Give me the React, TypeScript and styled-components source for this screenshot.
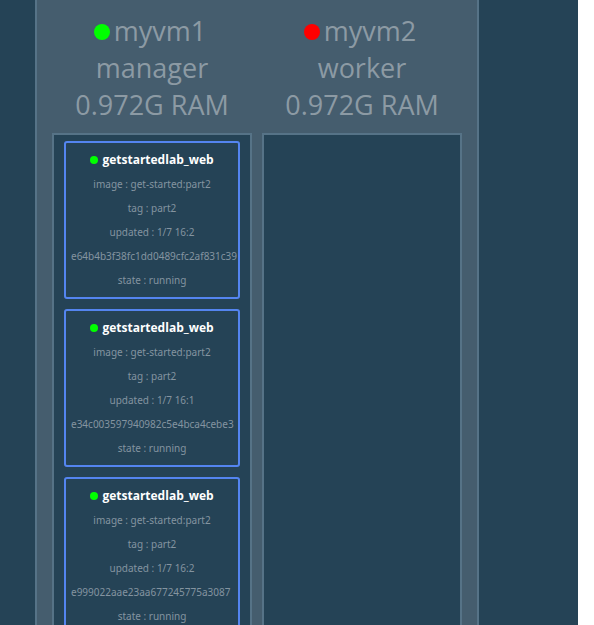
import React from 'react';
import styled, { createGlobalStyle } from 'styled-components';

const GlobalStyle = createGlobalStyle`
  * { box-sizing: border-box; }
  body {
    margin: 0;
    padding-right: 16px;
    background: #ffffff;
    font-family: 'Open Sans', 'Noto Sans', sans-serif;
    scrollbar-width: none;
  }
`;

const Page = styled.main`
  display: flex;
  align-items: stretch;
  min-height: 100vh;
  padding-left: 35px;
  background: #254356;
`;

const Cluster = styled.section`
  display: flex;
  gap: 10px;
  padding: 12px 15px 0;
  background: #455d6e;
  border: solid #567387;
  border-width: 0 2px;
`;

const NodeColumn = styled.article`
  display: flex;
  flex-direction: column;
  width: 200px;
`;

const NodeHeader = styled.header`
  padding-bottom: 10px;
  color: #8c9aa4;
  font-size: 27px;
  line-height: 37px;
  text-align: center;
`;

const NodeLine = styled.div`
  display: flex;
  align-items: center;
  justify-content: center;
  gap: 4px;
  padding-right: 4px;
`;

const NodeName = styled.h1`
  margin: 0;
  font: inherit;
`;

const Dot = styled.span<{ $size: number; $color: string }>`
  flex: none;
  width: ${(p) => p.$size}px;
  height: ${(p) => p.$size}px;
  border-radius: 50%;
  background: ${(p) => p.$color};
`;

const NodeDot = styled(Dot)`
  margin-top: 2px;
`;

const TaskList = styled.ul`
  display: flex;
  flex: 1;
  flex-direction: column;
  gap: 10px;
  margin: 0;
  padding: 6px 10px;
  list-style: none;
  background: #254356;
  border: 2px solid #567387;
`;

const TaskCard = styled.li`
  padding: 5px;
  border: 2px solid #5485f0;
  border-radius: 3px;
  color: #8494a0;
  font-family: 'Noto Sans', 'Open Sans', sans-serif;
  font-size: 10px;
  line-height: 24px;
  text-align: center;
`;

const TaskTitle = styled.h2`
  display: flex;
  align-items: center;
  justify-content: center;
  gap: 4px;
  margin: 0;
  color: #ffffff;
  font-family: 'Open Sans', 'Noto Sans', sans-serif;
  font-size: 12px;
  font-weight: 700;
  line-height: 24px;
`;

const TaskLine = styled.div`
  white-space: nowrap;
`;

const TaskId = styled(TaskLine)`
  margin-right: -7px;
  overflow: hidden;
  text-align: left;
`;

interface Task {
  id: string;
  updated: string;
}

interface ClusterNode {
  name: string;
  role: string;
  color: string;
  tasks: Task[];
}

const nodes: ClusterNode[] = [
  {
    name: 'myvm1',
    role: 'manager',
    color: '#00ff00',
    tasks: [
      { id: 'e64b4b3f38fc1dd0489cfc2af831c39', updated: '1/7 16:2' },
      { id: 'e34c003597940982c5e4bca4cebe3', updated: '1/7 16:1' },
      { id: 'e999022aae23aa677245775a3087', updated: '1/7 16:2' },
    ],
  },
  { name: 'myvm2', role: 'worker', color: '#ff0000', tasks: [] },
];

export default function App() {
  return (
    <>
      <GlobalStyle />
      <Page>
        <Cluster>
          {nodes.map((node) => (
            <NodeColumn key={node.name}>
              <NodeHeader>
                <NodeLine>
                  <NodeDot $size={16} $color={node.color} />
                  <NodeName>{node.name}</NodeName>
                </NodeLine>
                <div>{node.role}</div>
                <div>0.972G RAM</div>
              </NodeHeader>
              <TaskList>
                {node.tasks.map((task) => (
                  <TaskCard key={task.id}>
                    <TaskTitle>
                      <Dot $size={8} $color="#00ff00" />
                      getstartedlab_web
                    </TaskTitle>
                    <TaskLine>image : get-started:part2</TaskLine>
                    <TaskLine>tag : part2</TaskLine>
                    <TaskLine>updated : {task.updated}</TaskLine>
                    <TaskId>{task.id}</TaskId>
                    <TaskLine>state : running</TaskLine>
                  </TaskCard>
                ))}
              </TaskList>
            </NodeColumn>
          ))}
        </Cluster>
      </Page>
    </>
  );
}
